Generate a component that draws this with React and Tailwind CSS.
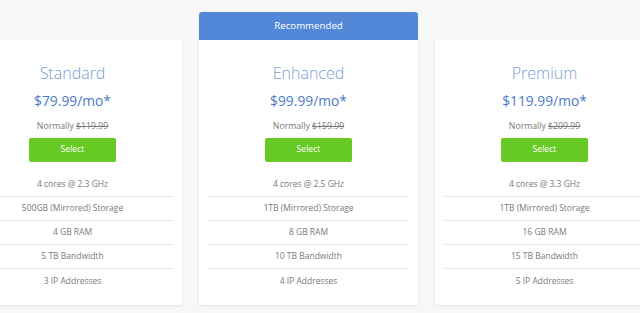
import React from "react";

const plans = [
  { name: "Standard", price: "$79.99/mo*", normal: "$119.99", features: ["4 cores @ 2.3 GHz", "500GB (Mirrored) Storage", "4 GB RAM", "5 TB Bandwidth", "3 IP Addresses"] },
  { name: "Enhanced", price: "$99.99/mo*", normal: "$159.99", rec: true, features: ["4 cores @ 2.5 GHz", "1TB (Mirrored) Storage", "8 GB RAM", "10 TB Bandwidth", "4 IP Addresses"] },
  { name: "Premium", price: "$119.99/mo*", normal: "$209.99", features: ["4 cores @ 3.3 GHz", "1TB (Mirrored) Storage", "16 GB RAM", "15 TB Bandwidth", "5 IP Addresses"] },
];

function Card({ p }) {
  return (
    <div className="w-[219px] shrink-0 flex flex-col">
      <div className="h-[28px]">
        {p.rec ? (
          <div className="w-full h-full bg-[#5288d7] rounded-t-[3px] flex items-center justify-center text-[9.7px] text-white">Recommended</div>
        ) : null}
      </div>
      <div className="bg-white rounded-b-[3px] shadow-[0_1px_3px_rgba(0,0,0,0.08)] pt-[22px] pb-[12px] flex flex-col items-center">
        <div className="text-[16px] leading-[23px] font-light text-[#7a9dd6]">{p.name}</div>
        <div className="mt-[6px] text-[13.8px] leading-[20px] text-[#4c79c9]">{p.price}</div>
        <div className="mt-[8px] text-[8.7px] leading-[14px] text-[#777]">
          Normally <span className="line-through">{p.normal}</span>
        </div>
        <button className="mt-[5px] w-[87px] h-[24px] rounded-[2px] bg-[#67c923] text-white text-[8.7px]">Select</button>
        <div className="mt-[11px] w-full px-[9px]">
          {p.features.map((f, i) => (
            <div key={i} className={"h-[24px] flex items-center justify-center text-[8.5px] text-[#7a7a7a] " + (i < 4 ? "border-b border-[#e6e6e6]" : "")}>
              {f}
            </div>
          ))}
        </div>
      </div>
    </div>
  );
}

export default function App() {
  return (
    <div className="w-[640px] h-[313px] overflow-hidden bg-[#f7f7f7]" style={{ fontFamily: '"Open Sans", sans-serif' }}>
      <div className="flex gap-[17px] ml-[-37px] pt-[12px]">
        {plans.map((p) => (
          <Card key={p.name} p={p} />
        ))}
      </div>
    </div>
  );
}
